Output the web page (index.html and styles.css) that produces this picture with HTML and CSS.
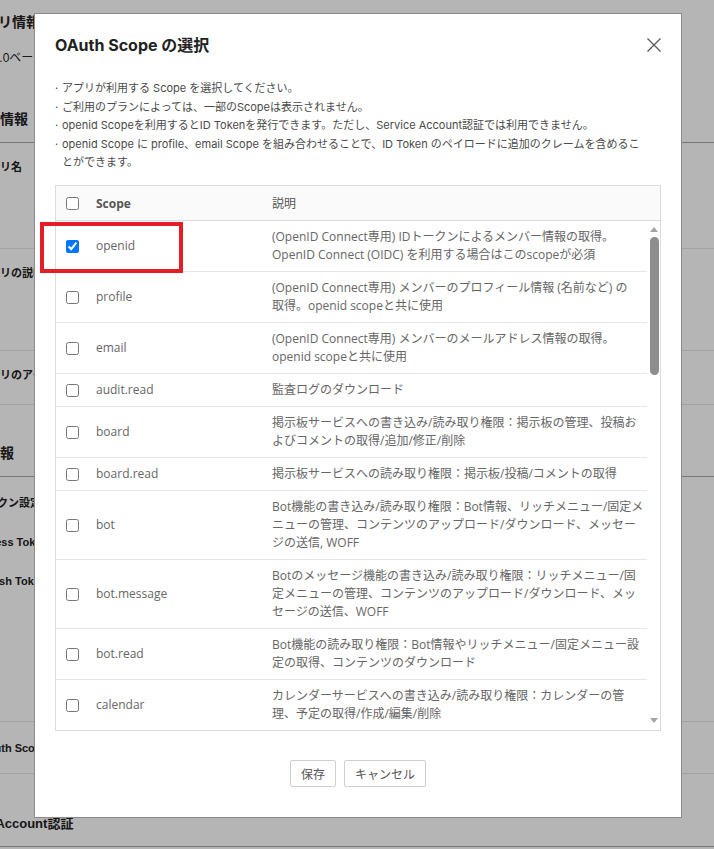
FILE: index.html
```html
<!DOCTYPE html>
<html lang="ja">
<head>
<meta charset="utf-8">
<title>OAuth Scope の選択</title>
<link rel="stylesheet" href="styles.css">
</head>
<body>
<div class="page">
  <h2 class="page-title">アプリ情報</h2>
  <p class="page-note">API 2.0ベータ版をご利用ください</p>

  <h3 class="section-title title-basic">基本情報</h3>
  <div class="field field-name"><span class="field-label">アプリ名</span></div>
  <div class="field field-desc"><span class="field-label">アプリの説明</span></div>
  <div class="field field-access"><span class="field-label">アプリのアクセス</span></div>

  <h3 class="section-title section-gap title-auth">認証情報</h3>
  <div class="field field-token">
    <span class="field-label token-label">トークン設定</span>
    <span class="field-label access-label">Access Token</span>
    <span class="field-label refresh-label">Refresh Token</span>
  </div>
  <div class="field field-scope"><span class="field-label">OAuth Scopes</span></div>

  <h3 class="section-title section-gap-last title-service">Service Account認証</h3>
</div>

<div class="overlay"></div>

<div class="modal" role="dialog" aria-labelledby="scope-title">
  <div class="modal-head">
    <h1 class="modal-title" id="scope-title">OAuth Scope の選択</h1>
    <button class="modal-close" type="button" aria-label="閉じる">
      <svg width="14" height="14" viewBox="0 0 14 14"><path d="M0.5 0.5 L13.5 13.5 M13.5 0.5 L0.5 13.5" stroke="#555" stroke-width="1.2" fill="none"/></svg>
    </button>
  </div>

  <ul class="notes">
    <li><span class="dot">·</span><span>アプリが利用する Scope を選択してください。</span></li>
    <li><span class="dot">·</span><span>ご利用のプランによっては、一部のScopeは表示されません。</span></li>
    <li><span class="dot">·</span><span>openid Scopeを利用するとID Tokenを発行できます。ただし、Service Account認証では利用できません。</span></li>
    <li><span class="dot">·</span><span>openid Scope に profile、email Scope を組み合わせることで、ID Token のペイロードに追加のクレームを含めるこ<br>とができます。</span></li>
  </ul>

  <div class="scope-table">
    <div class="scope-head">
      <span class="cell-check"><input type="checkbox"></span>
      <span class="cell-name head-name">Scope</span>
      <span class="cell-desc head-desc">説明</span>
    </div>
    <div class="scope-body">
      <div class="scope-list">
        <div class="scope-row"><span class="cell-check"><input type="checkbox" checked></span><span class="cell-name">openid</span><span class="cell-desc">(OpenID Connect専用) IDトークンによるメンバー情報の取得。<br>OpenID Connect (OIDC) を利用する場合はこのscopeが必須</span></div>
        <div class="scope-row"><span class="cell-check"><input type="checkbox"></span><span class="cell-name">profile</span><span class="cell-desc">(OpenID Connect専用) メンバーのプロフィール情報 (名前など) の<br>取得。openid scopeと共に使用</span></div>
        <div class="scope-row"><span class="cell-check"><input type="checkbox"></span><span class="cell-name">email</span><span class="cell-desc">(OpenID Connect専用) メンバーのメールアドレス情報の取得。<br>openid scopeと共に使用</span></div>
        <div class="scope-row"><span class="cell-check"><input type="checkbox"></span><span class="cell-name">audit.read</span><span class="cell-desc">監査ログのダウンロード</span></div>
        <div class="scope-row"><span class="cell-check"><input type="checkbox"></span><span class="cell-name">board</span><span class="cell-desc">掲示板サービスへの書き込み/読み取り権限：掲示板の管理、投稿お<br>よびコメントの取得/追加/修正/削除</span></div>
        <div class="scope-row"><span class="cell-check"><input type="checkbox"></span><span class="cell-name">board.read</span><span class="cell-desc">掲示板サービスへの読み取り権限：掲示板/投稿/コメントの取得</span></div>
        <div class="scope-row"><span class="cell-check"><input type="checkbox"></span><span class="cell-name">bot</span><span class="cell-desc">Bot機能の書き込み/読み取り権限：Bot情報、リッチメニュー/固定メ<br>ニューの管理、コンテンツのアップロード/ダウンロード、メッセー<br>ジの送信, WOFF</span></div>
        <div class="scope-row"><span class="cell-check"><input type="checkbox"></span><span class="cell-name">bot.message</span><span class="cell-desc">Botのメッセージ機能の書き込み/読み取り権限：リッチメニュー/固<br>定メニューの管理、コンテンツのアップロード/ダウンロード、メッ<br>セージの送信、WOFF</span></div>
        <div class="scope-row"><span class="cell-check"><input type="checkbox"></span><span class="cell-name">bot.read</span><span class="cell-desc">Bot機能の読み取り権限：Bot情報やリッチメニュー/固定メニュー設<br>定の取得、コンテンツのダウンロード</span></div>
        <div class="scope-row"><span class="cell-check"><input type="checkbox"></span><span class="cell-name">calendar</span><span class="cell-desc">カレンダーサービスへの書き込み/読み取り権限：カレンダーの管<br>理、予定の取得/作成/編集/削除</span></div>
        <div class="scope-row"><span class="cell-check"><input type="checkbox"></span><span class="cell-name">calendar.read</span><span class="cell-desc">カレンダーサービスへの読み取り権限：カレンダー/予定の取得</span></div>
        <div class="scope-row"><span class="cell-check"><input type="checkbox"></span><span class="cell-name">contact</span><span class="cell-desc">アドレス帳サービスへの書き込み/読み取り権限</span></div>
      </div>
      <div class="scrollbar" aria-hidden="true">
        <span class="arrow arrow-up"></span>
        <span class="thumb"></span>
        <span class="arrow arrow-down"></span>
      </div>
    </div>
  </div>

  <div class="modal-foot">
    <button class="btn" type="button">保存</button>
    <button class="btn" type="button">キャンセル</button>
  </div>

  <span class="highlight" aria-hidden="true"></span>
</div>
</body>
</html>
```

FILE: styles.css
```css
html, body {
  margin: 0;
  padding: 0;
}

body {
  background: #fff;
  font-family: "Liberation Sans", "Noto Sans CJK JP", sans-serif;
  color: #222;
  width: 714px;
  height: 849px;
  overflow: hidden;
}

/* ---- settings page behind the dialog ---- */
.page {
  margin-left: -22px;
}

.page-title {
  margin: 0 0 0 -8px;
  padding-top: 12px;
  font-size: 14px;
  line-height: 20px;
  font-weight: bold;
}

.page-note {
  margin: 18px 0 0 -8px;
  font-size: 12px;
  line-height: 16px;
}

.section-title {
  margin: 0;
  padding: 43px 0 13px;
  font-size: 14px;
  line-height: 20px;
  font-weight: bold;
  border-bottom: 1px solid #aaa;
}

.title-basic {
  text-indent: -6px;
}

.title-auth {
  text-indent: -20px;
}

.title-service {
  font-size: 13px;
  text-indent: -32px;
}

.section-gap {
  padding-top: 38px;
}

.section-gap-last {
  padding: 40px 0 12px;
}

.field {
  display: flex;
  flex-direction: column;
  box-sizing: border-box;
  border-bottom: 1px solid #e4e4e4;
  padding-top: 17px;
  font-size: 11px;
  line-height: 14px;
  font-weight: bold;
}

.field-name { height: 106px; }
.field-desc { height: 102px; }
.field-access { height: 54px; }
.field-token { height: 245px; padding-top: 19px; gap: 25px; }
.field-scope { height: 52px; padding-top: 19px; }

.token-label { margin-left: -3px; }
.access-label { margin-left: -3px; }
.refresh-label { margin-left: -7px; }

.overlay {
  position: fixed;
  inset: 0;
  background: rgba(0, 0, 0, 0.29);
}

/* ---- dialog ---- */
.modal {
  position: fixed;
  top: 13px;
  left: 34px;
  width: 648px;
  height: 805px;
  box-sizing: border-box;
  background: #fff;
  border: 1px solid #8c8c8c;
  padding: 18.5px 20px 0;
  font-family: Inter, "Noto Sans CJK JP", sans-serif;
}

.modal-head {
  display: flex;
  align-items: center;
  justify-content: space-between;
}

.modal-title {
  margin: 0;
  font-size: 16px;
  line-height: 24px;
  font-weight: bold;
  color: #222;
}

.modal-close {
  display: flex;
  padding: 0;
  border: 0;
  background: none;
  margin-top: 1px;
}

.notes {
  list-style: none;
  margin: 22.5px 0 0;
  padding: 0;
  font-size: 11px;
  line-height: 18.5px;
  color: #4a4a4a;
}

.notes li {
  display: flex;
}

.dot {
  flex: 0 0 7px;
}

/* ---- scope table ---- */
.scope-table {
  margin-top: 13.5px;
  border: 1px solid #dcdcdc;
  font-family: "Open Sans", "Noto Sans CJK JP", sans-serif;
  font-size: 12px;
  color: #666;
}

.scope-head,
.scope-row {
  display: grid;
  grid-template-columns: 40px 176px 1fr;
  align-items: center;
}

.scope-head {
  height: 34px;
  background: #fafafa;
  border-bottom: 1px solid #dcdcdc;
  color: #555;
  padding-right: 13px;
}

.head-name {
  font-weight: bold;
}

.head-desc {
  font-weight: normal;
}

.scope-body {
  display: flex;
  height: 509px;
  overflow: hidden;
}

.scope-list {
  width: 591px;
  flex: none;
}

.scope-row {
  border-bottom: 1px solid #e6e6e6;
  padding: 7px 0;
  line-height: 18px;
}

.cell-check {
  display: flex;
  padding-left: 10px;
}

.cell-check input {
  margin: 0;
  width: 13px;
  height: 13px;
}

.cell-desc {
  padding-right: 3px;
  white-space: nowrap;
}

.scrollbar {
  flex: 1;
  display: flex;
  flex-direction: column;
  align-items: center;
  padding: 6px 0 7px 1px;
}

.thumb {
  width: 9px;
  height: 138px;
  margin-top: 5px;
  border-radius: 5px;
  background: #8d8d8d;
}

.arrow {
  width: 0;
  height: 0;
  border-left: 4px solid transparent;
  border-right: 4px solid transparent;
}

.arrow-up {
  border-bottom: 5px solid #a3a3a3;
}

.arrow-down {
  margin-top: auto;
  border-top: 5px solid #a3a3a3;
}

/* ---- footer ---- */
.modal-foot {
  display: flex;
  justify-content: center;
  gap: 8px;
  margin-top: 29px;
}

.btn {
  height: 27px;
  padding: 0 10px;
  border: 1px solid #cfcfcf;
  border-radius: 2px;
  background: #fff;
  color: #555;
  font-family: "Open Sans", "Noto Sans CJK JP", sans-serif;
  font-size: 12px;
}

/* annotation box around the openid row */
.highlight {
  position: absolute;
  left: 5px;
  top: 208px;
  width: 143px;
  height: 51px;
  box-sizing: border-box;
  border: 4px solid #e31e26;
}
```
